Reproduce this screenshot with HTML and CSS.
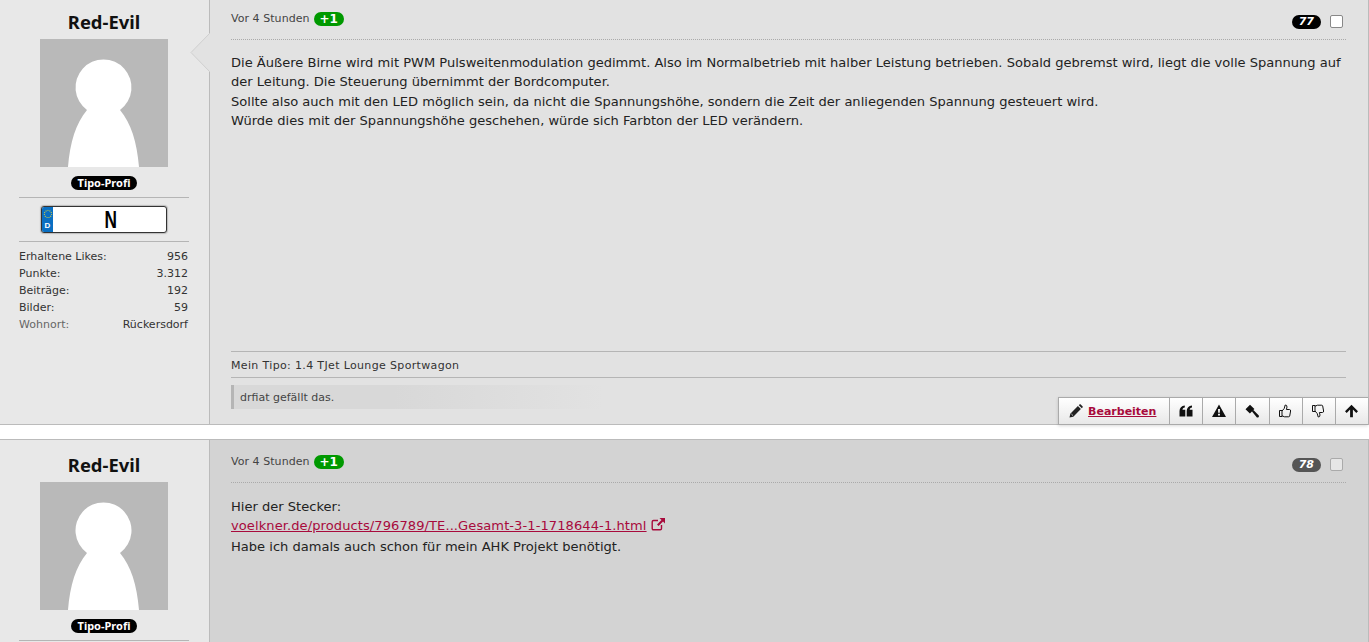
FILE: index.html
```html
<!DOCTYPE html>
<html>
<head>
  <title>Tipo Forum</title>
  <link rel="stylesheet" href="styles.css">
</head>
<body>
  <!-- Beitrag 77 -->
  <article class="post">
    <aside class="sidebar">
      <h3 class="username">Red-Evil</h3>
      <svg class="avatar" viewBox="0 0 128 128">
        <rect width="128" height="128" fill="#b9b9b9"/>
        <path d="M28 128C30 103 36 84 47 71A28 28 0 1 1 80 71C91 84 97 103 99 128Z" fill="#fff"/>
      </svg>
      <div class="rank"><span>Tipo-Profi</span></div>
      <div class="plateRow">
        <div class="plate">
          <div class="plateBlue">
            <svg class="plateStars" viewBox="0 0 10 10"><circle cx="5" cy="5" r="3.6" fill="none" stroke="#c8c84a" stroke-width="1.1" stroke-dasharray="1 1"/></svg>
            <span>D</span>
          </div>
          <div class="plateText"><span>N</span></div>
        </div>
      </div>
      <dl class="stats">
        <div><dt>Erhaltene Likes:</dt><dd>956</dd></div>
        <div><dt>Punkte:</dt><dd>3.312</dd></div>
        <div><dt>Beiträge:</dt><dd>192</dd></div>
        <div><dt>Bilder:</dt><dd>59</dd></div>
        <div class="muted"><dt>Wohnort:</dt><dd>Rückersdorf</dd></div>
      </dl>
    </aside>
    <svg class="arrow" viewBox="0 0 20 40"><path d="M20 0L1 19.500L20 39" fill="#e2e2e2" stroke="#cfcfcf"/></svg>
    <div class="main">
      <header class="postHead">
        <span class="time">Vor 4 Stunden</span>
        <span class="plus">+1</span>
        <span class="count">77</span>
        <span class="check"></span>
      </header>
      <div class="text">
        Die Äußere Birne wird mit PWM Pulsweitenmodulation gedimmt. Also im Normalbetrieb mit halber Leistung betrieben. Sobald gebremst wird, liegt die volle Spannung auf der Leitung. Die Steuerung übernimmt der Bordcomputer.<br>
        Sollte also auch mit den LED möglich sein, da nicht die Spannungshöhe, sondern die Zeit der anliegenden Spannung gesteuert wird.<br>
        Würde dies mit der Spannungshöhe geschehen, würde sich Farbton der LED verändern.
      </div>
      <div class="signature">Mein Tipo: 1.4 TJet Lounge Sportwagon</div>
      <div class="likes">drfiat gefällt das.</div>
    </div>
    <!-- Buttons -->
    <div class="actions">
      <a class="action editBtn">
        <svg class="icon" viewBox="0 0 14 14"><path d="M0.500 13.500L1.300 9.700L8.900 2.100L11.900 5.100L4.300 12.700ZM9.800 1.200L10.700 0.300Q11.100 0 11.500 0.300L13.700 2.500Q14 2.900 13.700 3.300L12.800 4.200Z" fill="#222"/><path d="M2.400 10L4 11.600" stroke="#eee" stroke-width="0.800"/></svg>
        <span>Bearbeiten</span>
      </a>
      <a class="action"><svg class="icon" viewBox="0 0 14 14"><path d="M0.500 7C0.500 3.800 2.500 1.800 5.800 1.400V3.500C4.300 3.800 3.500 4.600 3.500 5.800H6.300V12.500H0.500ZM7.700 7C7.700 3.800 9.700 1.800 13 1.400V3.500C11.500 3.800 10.700 4.600 10.700 5.800H13.500V12.500H7.700Z" fill="#111"/></svg></a>
      <a class="action"><svg class="icon" viewBox="0 0 14 14"><path fill-rule="evenodd" d="M7 0.500L14 13H0ZM6 5L6.200 8.800H7.800L8 5ZM6 9.800V11.500H8V9.800Z" fill="#111"/></svg></a>
      <a class="action"><svg class="icon" viewBox="0 0 14 14"><path d="M0.500 5.200L5 0.700L9.400 5.100L4.900 9.600ZM7 7.500L8.400 6.100L13.800 11.500Q14.200 12.500 13.500 13.200Q12.700 13.900 11.900 13.400Z" fill="#111"/></svg></a>
      <a class="action"><svg class="icon" viewBox="0 0 14 14"><path d="M0.500 6.500H3V12.500H0.500ZM3 7L5.200 4.500L6.200 1Q8 0.800 8 3L7.400 5.500H10.500Q11.800 5.700 11.600 7L10.700 12Q10.500 12.800 9.500 12.800H5.500L3 11.800" fill="none" stroke="#111" stroke-width="1" stroke-linejoin="round"/></svg></a>
      <a class="action"><svg class="icon" viewBox="0 0 14 14"><path d="M0.500 1.500H3V7.500H0.500ZM3 7L5.200 9.500L6.200 13Q8 13.200 8 11L7.400 8.500H10.500Q11.800 8.300 11.600 7L10.700 2Q10.500 1.200 9.500 1.200H5.500L3 2.200" fill="none" stroke="#111" stroke-width="1" stroke-linejoin="round"/></svg></a>
      <a class="action"><svg class="icon" viewBox="0 0 14 14"><path d="M6.500 0.800L13 7.300L11.300 9L7.900 5.600V13.200H5.100V5.600L1.700 9L0 7.300Z" fill="#111"/></svg></a>
    </div>
  </article>

  <!-- Beitrag 78 -->
  <article class="post second">
    <aside class="sidebar">
      <h3 class="username">Red-Evil</h3>
      <svg class="avatar" viewBox="0 0 128 128">
        <rect width="128" height="128" fill="#b9b9b9"/>
        <path d="M28 128C30 103 36 84 47 71A28 28 0 1 1 80 71C91 84 97 103 99 128Z" fill="#fff"/>
      </svg>
      <div class="rank"><span>Tipo-Profi</span></div>
    </aside>
    <div class="main">
      <header class="postHead">
        <span class="time">Vor 4 Stunden</span>
        <span class="plus">+1</span>
        <span class="count">78</span>
        <span class="check"></span>
      </header>
      <div class="text">
        Hier der Stecker:<br>
        <span class="linkLine">
          <a class="extLink">voelkner.de/products/796789/TE...Gesamt-3-1-1718644-1.html</a>
          <svg class="extIcon" viewBox="0 0 14 14"><path d="M10.500 8V11.500Q10.500 12.800 9.200 12.800H2.500Q1.200 12.800 1.200 11.500V4.800Q1.200 3.500 2.500 3.500H7" fill="none" stroke="#a80a3c" stroke-width="1.400"/><path d="M8.500 1H14V6.500L12 4.500L7.500 9L6 7.500L10.500 3Z" fill="#a80a3c"/></svg>
        </span>
        Habe ich damals auch schon für mein AHK Projekt benötigt.
      </div>
    </div>
  </article>
</body>
</html>
```

FILE: styles.css
```css
html, body {
  margin: 0;
  padding: 0;
  height: 100vh;
  overflow: hidden;
  background: #fff;
}
body {
  font-family: "DejaVu Sans", Verdana, sans-serif;
  color: #222;
}
.post {
  position: relative;
  display: flex;
  box-sizing: border-box;
  height: 425px;
  border-bottom: 1px solid #bbb;
  border-right: 1px solid #bbb;
  background: #e2e2e2;
}
.post.second {
  margin-top: 14px;
  height: 203px;
  border-top: 1px solid #bbb;
  border-bottom: none;
  background: #d3d3d3;
}
.sidebar {
  width: 210px;
  flex-shrink: 0;
  box-sizing: border-box;
  padding: 11px 20px 0 19px;
  background: #e8e8e8;
  border-right: 1px solid #bbb;
}
.second .sidebar {
  padding-top: 14px;
}
.username {
  margin: 0 0 7px;
  text-align: center;
  font: bold 18.400px/21px "Noto Sans", sans-serif;
  color: #111;
}
.avatar {
  display: block;
  width: 128px;
  height: 128px;
  margin: 0 auto;
}
.rank {
  height: 14px;
  margin-top: 9px;
  padding-bottom: 7px;
  border-bottom: 1px solid #b5b5b5;
  text-align: center;
  line-height: 14px;
}
.rank span {
  display: inline-block;
  padding: 0 7px;
  border-radius: 7px;
  background: #000;
  color: #fff;
  font: bold 11px/14px "Noto Sans", sans-serif;
  position: relative;
  top: -1px;
}
.plateRow {
  padding: 8px 0;
  border-bottom: 1px solid #b5b5b5;
}
.plate {
  display: flex;
  box-sizing: border-box;
  width: 126px;
  height: 27px;
  margin: 0 auto;
  overflow: hidden;
  border: 1px solid #333;
  border-radius: 3px;
  background: #fff;
  box-shadow: 0 0 1px 1px #bbb;
}
.plateBlue {
  width: 11px;
  background: #0a6fc2;
  display: flex;
  flex-direction: column;
  align-items: center;
  color: #fff;
  font: bold 8px/8px "Liberation Sans", sans-serif;
}
.plateStars {
  width: 10px;
  height: 10px;
  margin: 2px 0 3px;
}
.plateText {
  flex: 1;
  padding-left: 3px;
  text-align: center;
  color: #000;
  font: bold 24px/25px "Liberation Sans", sans-serif;
}
.plateText span {
  display: inline-block;
  transform: scaleX(0.72);
}
.stats {
  margin: 6px 0 0;
  padding-right: 1px;
  font-size: 11px;
  line-height: 17px;
  color: #333;
}
.stats div {
  display: flex;
  justify-content: space-between;
}
.stats dd {
  margin: 0;
}
.stats .muted dt {
  color: #666;
}
.arrow {
  position: absolute;
  left: 190px;
  top: 33px;
  width: 20px;
  height: 40px;
}
.main {
  flex: 1;
  min-width: 0;
  display: flex;
  flex-direction: column;
  padding: 0 22px 0 21px;
}
.second .main {
  padding-top: 3px;
}
.postHead {
  display: flex;
  align-items: center;
  height: 39px;
  flex-shrink: 0;
  border-bottom: 1px dotted #aaa;
  font-size: 11px;
  color: #444;
}
.time {
  margin-right: 4px;
  letter-spacing: 0.05px;
  position: relative;
  top: -1px;
}
.plus {
  position: relative;
  top: -1px;
  padding: 0 6px;
  border-radius: 7px;
  background: #090;
  color: #fff;
  font: bold 12px/14px "DejaVu Sans", sans-serif;
}
.count {
  margin-left: auto;
  padding: 0 7px;
  border-radius: 7px;
  background: #000;
  color: #fff;
  font: italic bold 11px/14px "DejaVu Sans", sans-serif;
  position: relative;
  top: 2px;
}
.second .count {
  background: #555;
}
.check {
  box-sizing: border-box;
  width: 13px;
  height: 13px;
  margin: 0 3px 0 9px;
  border: 1px solid #888;
  border-radius: 2px;
  background: #fff;
  position: relative;
  top: 2px;
}
.second .check {
  background: #e6e6e6;
  border-color: #aaa;
}
.text {
  flex: 1;
  padding-top: 13px;
  font-size: 13.050px;
  line-height: 19.300px;
  color: #222;
}
.second .text {
  padding-top: 14px;
}
.linkLine {
  display: block;
  margin-bottom: 1px;
}
.extLink {
  color: #a80a3c;
  letter-spacing: 0.080px;
  text-decoration: underline;
}
.extIcon {
  width: 14px;
  height: 14px;
  vertical-align: -1px;
}
.signature {
  height: 25px;
  border-top: 1px solid #b5b5b5;
  border-bottom: 1px solid #b5b5b5;
  font-size: 11px;
  letter-spacing: 0.350px;
  line-height: 27px;
  color: #333;
}
.likes {
  box-sizing: border-box;
  height: 24px;
  margin: 7px 0 15px;
  padding-left: 6px;
  border-left: 3px solid #b5b5b5;
  background: linear-gradient(to right, #d8d8d8, #d8d8d8 160px, #e2e2e2 370px);
  font-size: 11px;
  line-height: 26px;
  color: #444;
}
.actions {
  position: absolute;
  right: 0;
  bottom: -1px;
  display: flex;
  height: 28px;
  box-sizing: border-box;
  border: 1px solid #aaa;
  border-right: none;
  background: linear-gradient(to bottom, #fff, #e8e8e8);
  box-shadow: 0 1px 3px rgba(0, 0, 0, 0.15);
  z-index: 1;
}
.action {
  display: flex;
  align-items: center;
  justify-content: center;
  box-sizing: border-box;
  width: 33.170px;
  border-left: 1px solid #aaa;
}
.action.editBtn {
  width: 110px;
  justify-content: flex-start;
  padding-left: 10px;
  border-left: none;
  color: #a80a3c;
  font-size: 11px;
  font-weight: bold;
  text-decoration: underline;
}
.editBtn span {
  margin-left: 5px;
}
.icon {
  width: 14px;
  height: 14px;
}
```
